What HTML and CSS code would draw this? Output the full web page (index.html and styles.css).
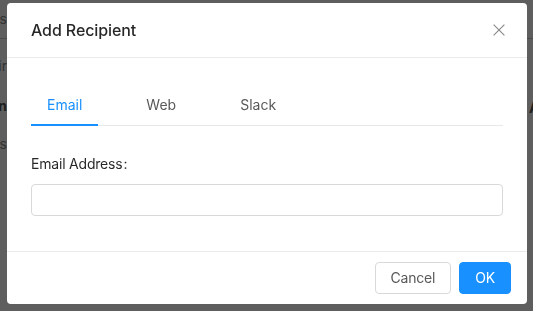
FILE: index.html
```html
<!DOCTYPE html>
<html lang="en">
<head>
    <meta charset="UTF-8">
    <meta name="viewport" content="width=device-width, initial-scale=1.0">
    <title>Add Recipient</title>
    <link rel="stylesheet" href="styles.css">
</head>
<body>

<div class="page">
    <div class="pageBar"><span class="crumb">Settings</span></div>
    <div class="pageMain">
        <div class="side">
            <div class="sideItem">Pair</div>
            <div class="sideItem sideHead">Chan</div>
            <div class="sideItem">Hosts</div>
        </div>
        <div class="content"></div>
        <div class="aside"><div class="asideHead">Actions</div></div>
    </div>
</div>

<div class="mask"></div>

<div class="modalWrap">
    <div class="modal">
        <div class="modalHeader">
            <div class="modalTitle">Add Recipient</div>
            <button class="modalClose" aria-label="Close">
                <svg width="12" height="12" viewBox="0 0 12 12">
                    <path d="M0.6 0.6 L11.4 11.4 M11.4 0.6 L0.6 11.4" stroke="currentColor" stroke-width="1.2" fill="none"/>
                </svg>
            </button>
        </div>

        <div class="modalBody">
            <div class="tabs">
                <div class="tab active">Email</div>
                <div class="tab">Web</div>
                <div class="tab">Slack</div>
            </div>

            <form class="form">
                <div class="formItem">
                    <label class="formLabel" for="email">Email Address</label>
                    <input class="formInput" type="text" id="email">
                </div>
            </form>
        </div>

        <div class="modalFooter">
            <button class="btn">Cancel</button>
            <button class="btn btnPrimary">OK</button>
        </div>
    </div>
</div>

</body>
</html>
```

FILE: styles.css
```css
body {
    font-family: Inter, "Liberation Sans", sans-serif;
    font-size: 14px;
    margin: 0;
    padding: 0;
    background-color: #fff;
}

/* page behind the dialog */
.page {
    height: 100vh;
    overflow: hidden;
    color: #8a8a8a;
    line-height: 22px;
}

.pageBar {
    height: 38px;
    border-bottom: 1px solid #c8c8c8;
    display: flex;
    align-items: center;
}

.crumb {
    width: 67px;
    margin-left: -60px;
    text-align: right;
}

.pageMain {
    display: flex;
}

.side {
    width: 67px;
    margin-left: -60px;
    padding-top: 16px;
    text-align: right;
}

.sideHead {
    margin: 18px 0 16px;
    font-weight: 700;
    color: #555;
}

.content {
    flex: 1;
}

.aside {
    width: 4px;
    padding-top: 58px;
    white-space: nowrap;
}

.asideHead {
    font-weight: 700;
    color: #555;
}

.mask {
    position: fixed;
    inset: 0;
    background-color: rgba(0, 0, 0, 0.63);
}

/* dialog */
.modalWrap {
    position: fixed;
    inset: 0;
    padding: 3px 0 0 7px;
}

.modal {
    width: 520px;
    background-color: #fff;
    border-radius: 4px;
    color: rgba(0, 0, 0, 0.85);
    line-height: 22px;
}

.modalHeader {
    display: flex;
    align-items: center;
    padding: 16px 24px;
    border-bottom: 1px solid #ebebeb;
}

.modalTitle {
    flex: 1;
    font-size: 16px;
    font-weight: 500;
    letter-spacing: -0.1px;
}

.modalClose {
    border: 0;
    background: none;
    padding: 0;
    margin-right: -2px;
    width: 12px;
    height: 12px;
    color: #8c8c8c;
    display: flex;
    cursor: pointer;
}

.modalBody {
    padding: 24px 24px 24px;
}

.tabs {
    display: flex;
    gap: 32px;
    border-bottom: 1px solid #e8e8e8;
    margin-bottom: 18px;
}

.tab {
    padding: 12px 16px 8px;
    color: #595959;
    border-bottom: 2px solid transparent;
    margin-bottom: -1px;
}

.tab.active {
    color: #1890ff;
    border-bottom-color: #1890ff;
}

.formItem {
    margin-bottom: 11px;
}

.formLabel {
    display: block;
    line-height: 40px;
    letter-spacing: -0.2px;
}

.formLabel::after {
    content: ":";
    margin: 0 8px 0 1px;
}

.formInput {
    display: block;
    width: 100%;
    height: 32px;
    box-sizing: border-box;
    border: 1px solid #d9d9d9;
    border-radius: 4px;
    padding: 4px 11px;
    font: inherit;
}

.modalFooter {
    display: flex;
    justify-content: flex-end;
    gap: 8px;
    padding: 10px 16px;
    border-top: 1px solid #ebebeb;
}

.btn {
    height: 32px;
    padding: 4px 15px;
    border: 1px solid #d9d9d9;
    border-radius: 4px;
    background-color: #fff;
    color: #595959;
    font: inherit;
    letter-spacing: -0.2px;
    cursor: pointer;
}

.btnPrimary {
    background-color: #1890ff;
    border-color: #1890ff;
    color: #fff;
}
```
